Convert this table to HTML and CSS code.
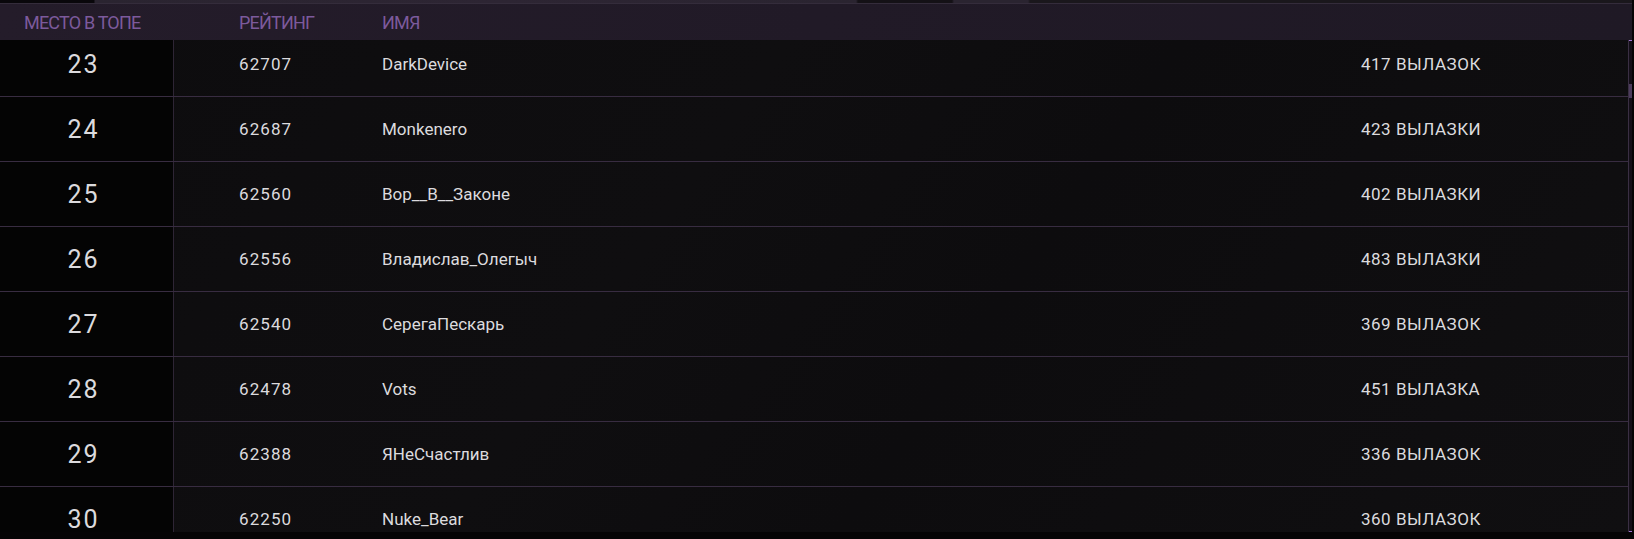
FILE: index.html
```html
<!DOCTYPE html>
<html lang="ru">
<head>
<meta charset="utf-8">
<title>Рейтинг</title>
<link rel="stylesheet" href="styles.css">
</head>
<body>
<div class="topstrip"></div>
<div class="board">
  <div class="head">
    <div class="hcell hplace">МЕСТО В ТОПЕ</div>
    <div class="hcell hrating">РЕЙТИНГ</div>
    <div class="hcell hname">ИМЯ</div>
  </div>
  <div class="body">
    <div class="rows">
      <div class="row row-first">
        <div class="place">23</div><div class="rating">62707</div><div class="name">DarkDevice</div><div class="sorties">417 ВЫЛАЗОК</div>
      </div>
      <div class="row">
        <div class="place">24</div><div class="rating">62687</div><div class="name">Monkenero</div><div class="sorties">423 ВЫЛАЗКИ</div>
      </div>
      <div class="row">
        <div class="place">25</div><div class="rating">62560</div><div class="name">Вор__В__Законе</div><div class="sorties">402 ВЫЛАЗКИ</div>
      </div>
      <div class="row">
        <div class="place">26</div><div class="rating">62556</div><div class="name">Владислав_Олегыч</div><div class="sorties">483 ВЫЛАЗКИ</div>
      </div>
      <div class="row">
        <div class="place">27</div><div class="rating">62540</div><div class="name">СерегаПескарь</div><div class="sorties">369 ВЫЛАЗОК</div>
      </div>
      <div class="row">
        <div class="place">28</div><div class="rating">62478</div><div class="name">Vots</div><div class="sorties">451 ВЫЛАЗКА</div>
      </div>
      <div class="row">
        <div class="place">29</div><div class="rating">62388</div><div class="name">ЯНеСчастлив</div><div class="sorties">336 ВЫЛАЗОК</div>
      </div>
      <div class="row">
        <div class="place">30</div><div class="rating">62250</div><div class="name">Nuke_Bear</div><div class="sorties">360 ВЫЛАЗОК</div>
      </div>
    </div>
    <div class="scrollbar">
      <div class="sb-cap"></div>
      <div class="sb-track"><div class="sb-thumb"></div></div>
      <div class="sb-cap"></div>
    </div>
  </div>
</div>
</body>
</html>
```

FILE: styles.css
```css
html, body {
  margin: 0;
  padding: 0;
}
body {
  width: 1634px;
  height: 539px;
  overflow: hidden;
  background: #050405;
  font-family: Roboto, "Liberation Sans", sans-serif;
  color: #dcdbde;
}
.topstrip {
  height: 3px;
  border-bottom: 1px solid #342c3b;
  background: linear-gradient(90deg, #09070b 0, #09070b 94px, #2a2430 95px, #2d2533 500px, #2a2430 856px, #141116 858px, #141116 952px, #2a2430 954px, #2a2430 1028px, #1a171c 1030px, #1a171c 1634px);
  width: 1632px;
}
.board {
  width: 1632px;
  display: flex;
  flex-direction: column;
}
.head {
  height: 36px;
  display: flex;
  align-items: center;
  background: linear-gradient(100deg, #241c2a 0%, #211a27 50%, #1f1925 100%);
  color: #7c5a9c;
  font-size: 18px;
  letter-spacing: -0.8px;
}
.hcell {
  white-space: nowrap;
}
.hplace {
  width: 215px;
  padding-left: 24px;
}
.hrating {
  width: 143px;
}
.body {
  display: flex;
  height: 492px;
}
.rows {
  width: 1628px;
  overflow: hidden;
  background: linear-gradient(125deg, #0d0c0e 0%, #0f0e10 40%, #0d0c0e 60%, #100f11 100%);
}
.row {
  height: 64px;
  border-bottom: 1px solid #382c41;
  display: flex;
  align-items: center;
  font-size: 17px;
}
.row-first {
  margin-top: -8px;
}
.place {
  width: 165px;
  padding-right: 8px;
  height: 100%;
  display: flex;
  align-items: center;
  justify-content: center;
  background: #040404;
  border-right: 1px solid #2e2535;
  font-size: 25px;
  letter-spacing: 2px;
  text-indent: 2px;
}
.rating {
  width: 143px;
  padding-left: 65px;
  letter-spacing: 1.1px;
}
.name {
  width: 979px;
  letter-spacing: 0px;
}
.sorties {
  letter-spacing: 0.5px;
  white-space: nowrap;
}
.scrollbar {
  width: 3px;
  border-left: 1px solid #3a2f43;
  display: flex;
  flex-direction: column;
  background: #140f18;
}
.sb-cap {
  height: 1px;
  background: #a074d4;
}
.sb-track {
  flex: 1;
}
.sb-thumb {
  margin-top: 43px;
  height: 14px;
  background: #4c3c5c;
}
```
